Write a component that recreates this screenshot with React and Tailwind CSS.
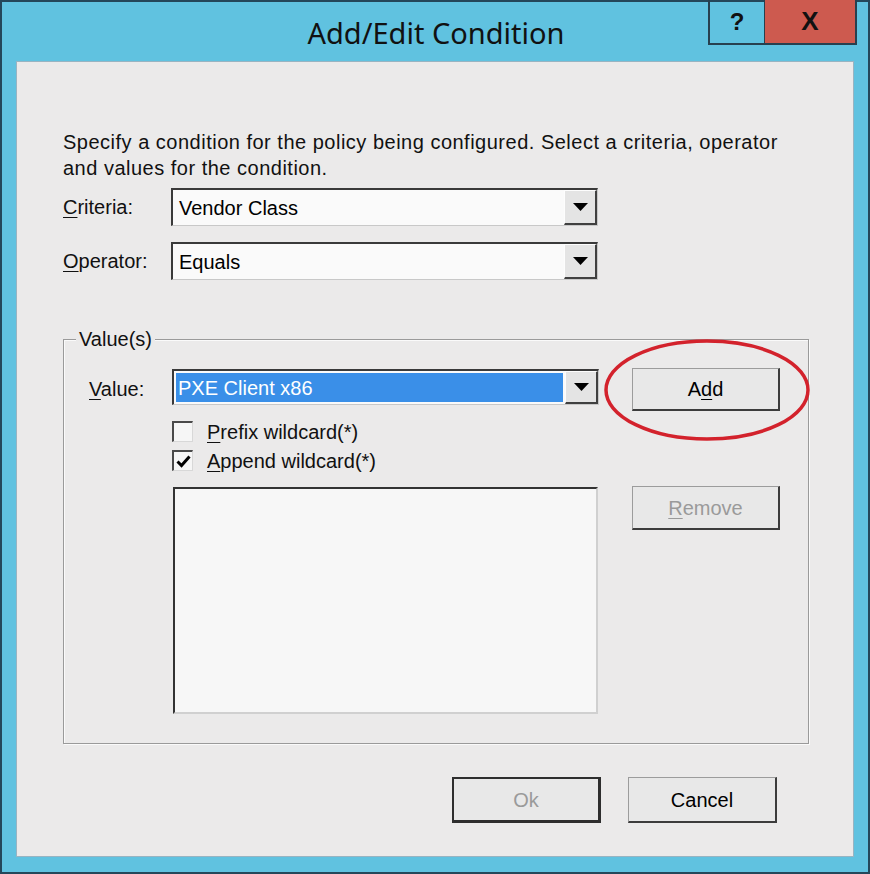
import React from "react";

const body = { fontFamily: '"Liberation Sans", Arial, sans-serif' };

function U({ children }) {
    return <span className="underline underline-offset-[3px] decoration-1">{children}</span>;
}

function Arrow() {
    return (
        <svg width="15" height="8" viewBox="0 0 15 8">
            <path d="M0 0 H15 L7.5 8 Z" fill="#000" />
        </svg>
    );
}

function Combo({ text, selected, h = "h-[38px]" }) {
    return (
        <div className={`flex ${h} w-[427px] border-t-2 border-l-2 border-[#3a3a3a] border-r border-b border-r-[#c8c8c8] border-b-[#c8c8c8] bg-[#fafafa]`}>
            <div className="flex flex-1 items-center p-[2px]">
                {selected ? (
                    <div className="flex h-full w-full items-center bg-[#3a8fe8] pl-[2px] text-white">{text}</div>
                ) : (
                    <div className="pl-[4px] text-black">{text}</div>
                )}
            </div>
            <div className="flex w-[33px] items-center justify-center border-t border-l border-[#fdfdfd] border-r-2 border-b-2 border-r-[#404040] border-b-[#404040] bg-[#e4e4e4]">
                <Arrow />
            </div>
        </div>
    );
}

function Button({ label, disabled, isDefault, className = "" }) {
    const border = isDefault
        ? "border-2 border-[#2e2e2e] border-b-[3px] border-r-[3px]"
        : "border-t border-l border-[#9c9c9c] border-r-2 border-b-2 border-r-[#3c3c3c] border-b-[#3c3c3c]";
    return (
        <div className={`flex items-center justify-center bg-[#e8e8e8] ${border} ${disabled ? "text-[#9a9a9a]" : "text-black"} ${className}`}>
            {label}
        </div>
    );
}

function Check({ checked }) {
    return (
        <div className="flex h-[21px] w-[21px] items-center justify-center border-t-2 border-l-2 border-[#4a4a4a] border-r border-b border-r-[#d8d8d8] border-b-[#d8d8d8] bg-[#f6f6f6]">
            {checked && (
                <svg width="15" height="13" viewBox="0 0 15 13">
                    <path d="M1.5 6.5 L5.5 10.5 L13.5 1.5" stroke="#000" strokeWidth="3" fill="none" />
                </svg>
            )}
        </div>
    );
}

export default function App() {
    return (
        <div className="relative flex h-[874px] w-[870px] flex-col border-2 border-[#24475a] bg-[#60c2e0]" style={body}>
            {/* title bar */}
            <div className="relative flex h-[59px] items-center justify-center">
                <span className="pt-[2px] pl-[2px] text-[29px] text-[#111]" style={{ fontFamily: '"Noto Sans", "Open Sans", sans-serif' }}>
                    Add/Edit Condition
                </span>
                <div className="absolute top-[-2px] right-[11px] flex h-[45px] border-2 border-t-0 border-[#27404f]">
                    <div className="flex w-[55px] items-center justify-center border-r border-[#27404f] text-[24px] font-bold text-[#111]">?</div>
                    <div className="flex w-[90px] items-center justify-center bg-[#cd5a4f] text-[26px] font-bold text-[#111]">X</div>
                </div>
            </div>

            {/* client area */}
            <div className="mx-[14px] flex h-[796px] flex-col border border-[#98b4c2] bg-[#ebeaea] pl-[46px] text-[20px] text-[#111]">
                <p className="mt-[67px] w-[728px] leading-[26px] tracking-[0.5px]">
                    Specify a condition for the policy being configured. Select a criteria, operator and values for the condition.
                </p>

                <div className="mt-[7px] flex items-center">
                    <span className="w-[108px]"><U>C</U>riteria:</span>
                    <Combo text="Vendor Class" />
                </div>
                <div className="mt-[16px] flex items-center">
                    <span className="w-[108px]"><U>O</U>perator:</span>
                    <Combo text="Equals" />
                </div>

                {/* Value(s) group */}
                <div className="relative mt-[59px] h-[405px] w-[746px] border border-[#9a9a9a] shadow-[inset_1px_1px_0_#fafafa,1px_1px_0_#fafafa]">
                    <span className="absolute top-[-14px] left-[12px] bg-[#ebeaea] px-[3px] leading-[26px]">Value(s)</span>
                    <div className="flex pt-[28px] pl-[25px]">
                        <span className="mt-[6px] w-[83px]"><U>V</U>alue:</span>
                        <div className="flex w-[427px] flex-col">
                            <div className="mt-[1px]">
                                <Combo text="PXE Client x86" selected h="h-[36px]" />
                            </div>
                            <div className="mt-[16px] flex h-[21px] items-center gap-[14px]">
                                <Check />
                                <span><U>P</U>refix wildcard(*)</span>
                            </div>
                            <div className="mt-[8px] flex h-[21px] items-center gap-[14px]">
                                <Check checked />
                                <span><U>A</U>ppend wildcard(*)</span>
                            </div>
                            <div className="mt-[16px] ml-[1px] h-[227px] w-[425px] border-t-2 border-l-2 border-[#333] border-r-2 border-b-2 border-r-[#d0d0d0] border-b-[#d0d0d0] bg-[#f7f7f7]" />
                        </div>
                        <div className="ml-[33px] flex flex-col">
                            <Button label={<span>A<U>d</U>d</span>} className="h-[43px] w-[148px]" />
                            <Button label={<span><U>R</U>emove</span>} disabled className="mt-[75px] h-[44px] w-[148px]" />
                        </div>
                    </div>
                </div>

                <div className="mt-[33px] flex pl-[389px]">
                    <Button label="Ok" disabled isDefault className="h-[46px] w-[149px]" />
                    <Button label="Cancel" className="ml-[27px] h-[46px] w-[149px]" />
                </div>
            </div>

            {/* red annotation ellipse */}
            <svg className="pointer-events-none absolute top-[336px] left-[600px]" width="214" height="108" viewBox="0 0 214 108">
                <ellipse cx="105" cy="52" rx="101" ry="49" fill="none" stroke="#d3222c" strokeWidth="3.5" />
            </svg>
        </div>
    );
}
